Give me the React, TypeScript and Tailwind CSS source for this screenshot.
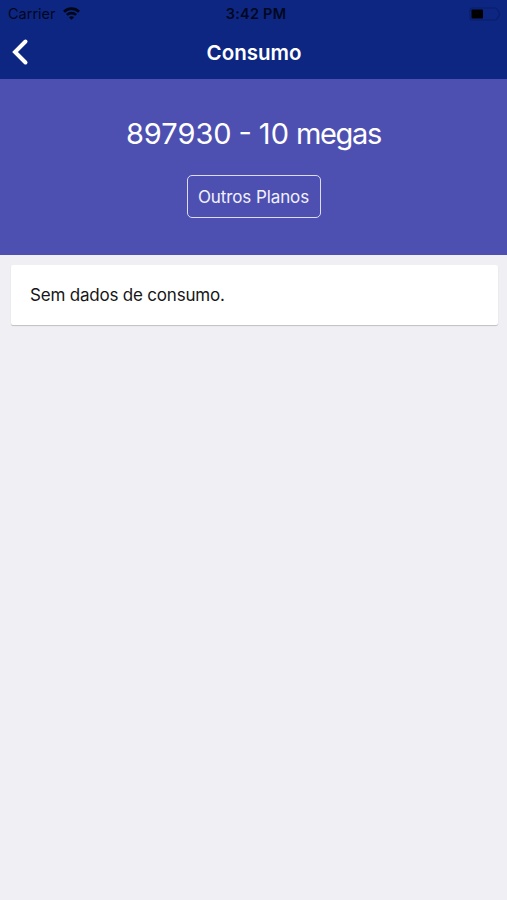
function WifiIcon() {
  return (
    <svg width="17" height="13" viewBox="0 0 17 13" fill="none" stroke="#020617" strokeWidth="2.7">
      <path d="M1 4.700C5.200.6 11.800.6 16 4.700" />
      <path d="M3.900 7.900c2.600-2.500 6.600-2.500 9.200 0" />
      <path d="M8.500 12.800 5.900 10.200c1.500-1.400 3.700-1.400 5.200 0z" fill="#020617" stroke="none" />
    </svg>
  );
}

function BatteryIcon() {
  return (
    <svg width="32" height="14" viewBox="0 0 32 14" fill="none">
      <path
        d="M3.500 1h22.500c1.200 0 1.800.5 2.300 1.500l1.900 3.300c.4.800.4 1.600 0 2.400l-1.900 3.300c-.5 1-1.100 1.500-2.300 1.500H3.500C2 13 1 12 1 10.500v-7C1 2 2 1 3.500 1z"
        stroke="#0a1d6b"
        strokeWidth="1.2"
      />
      <rect x="2.500" y="2.500" width="11.500" height="9" rx="0.8" fill="#000" />
    </svg>
  );
}

function StatusBar() {
  return (
    <div className="relative flex h-[27px] items-center justify-between pl-2 pr-[6px] text-[14.5px] text-[#020720]">
      <div className="flex items-center gap-[7px]">
        <span>Carrier</span>
        <WifiIcon />
      </div>
      <span className="absolute left-1/2 -translate-x-1/2 whitespace-nowrap pl-[5px] font-semibold tracking-[0.25px]">
        3:42 PM
      </span>
      <BatteryIcon />
    </div>
  );
}

function Header() {
  return (
    <header className="h-[79px] bg-[#0d2682]">
      <StatusBar />
      <div className="grid h-[50px] grid-cols-[40px_1fr_40px] items-center">
        <button className="flex justify-center" aria-label="Voltar">
          <svg
            width="18"
            height="28"
            viewBox="0 0 18 28"
            fill="none"
            stroke="#fff"
            strokeWidth="4"
            strokeLinecap="round"
          >
            <path d="M14.500 3.500 4 14l10.500 10.500" />
          </svg>
        </button>
        <h1 className="pl-px pt-[2px] text-center text-[20.5px] font-semibold text-white">Consumo</h1>
      </div>
    </header>
  );
}

export default function App() {
  return (
    <div className="min-h-screen bg-[#efeff4] font-['Inter',sans-serif]">
      <Header />
      <section className="flex h-[176px] flex-col items-center bg-[#4e50b1] pt-[36px] text-white">
        <h2 className="text-[29px] leading-[38px] [word-spacing:-1.2px]">
          897930 - 10 <span className="tracking-[-1.3px]">megas</span>
        </h2>
        <button className="mt-[22px] h-[43px] w-[134px] rounded-[5px] border-[1.500px] border-[#dcdcf5] pt-[2px] text-[17px] tracking-[-0.1px] text-[#f1f1fc]">
          Outros Planos
        </button>
      </section>
      <main className="pl-[11px] pr-[9px] pt-[10px]">
        <div className="flex h-[60px] items-center rounded-[2px] bg-white pl-[19px] pt-px text-[17px] tracking-[-0.2px] text-[#161616] shadow-[0_1px_1px_rgba(0,0,0,0.2)]">
          Sem dados de consumo.
        </div>
      </main>
    </div>
  );
}
